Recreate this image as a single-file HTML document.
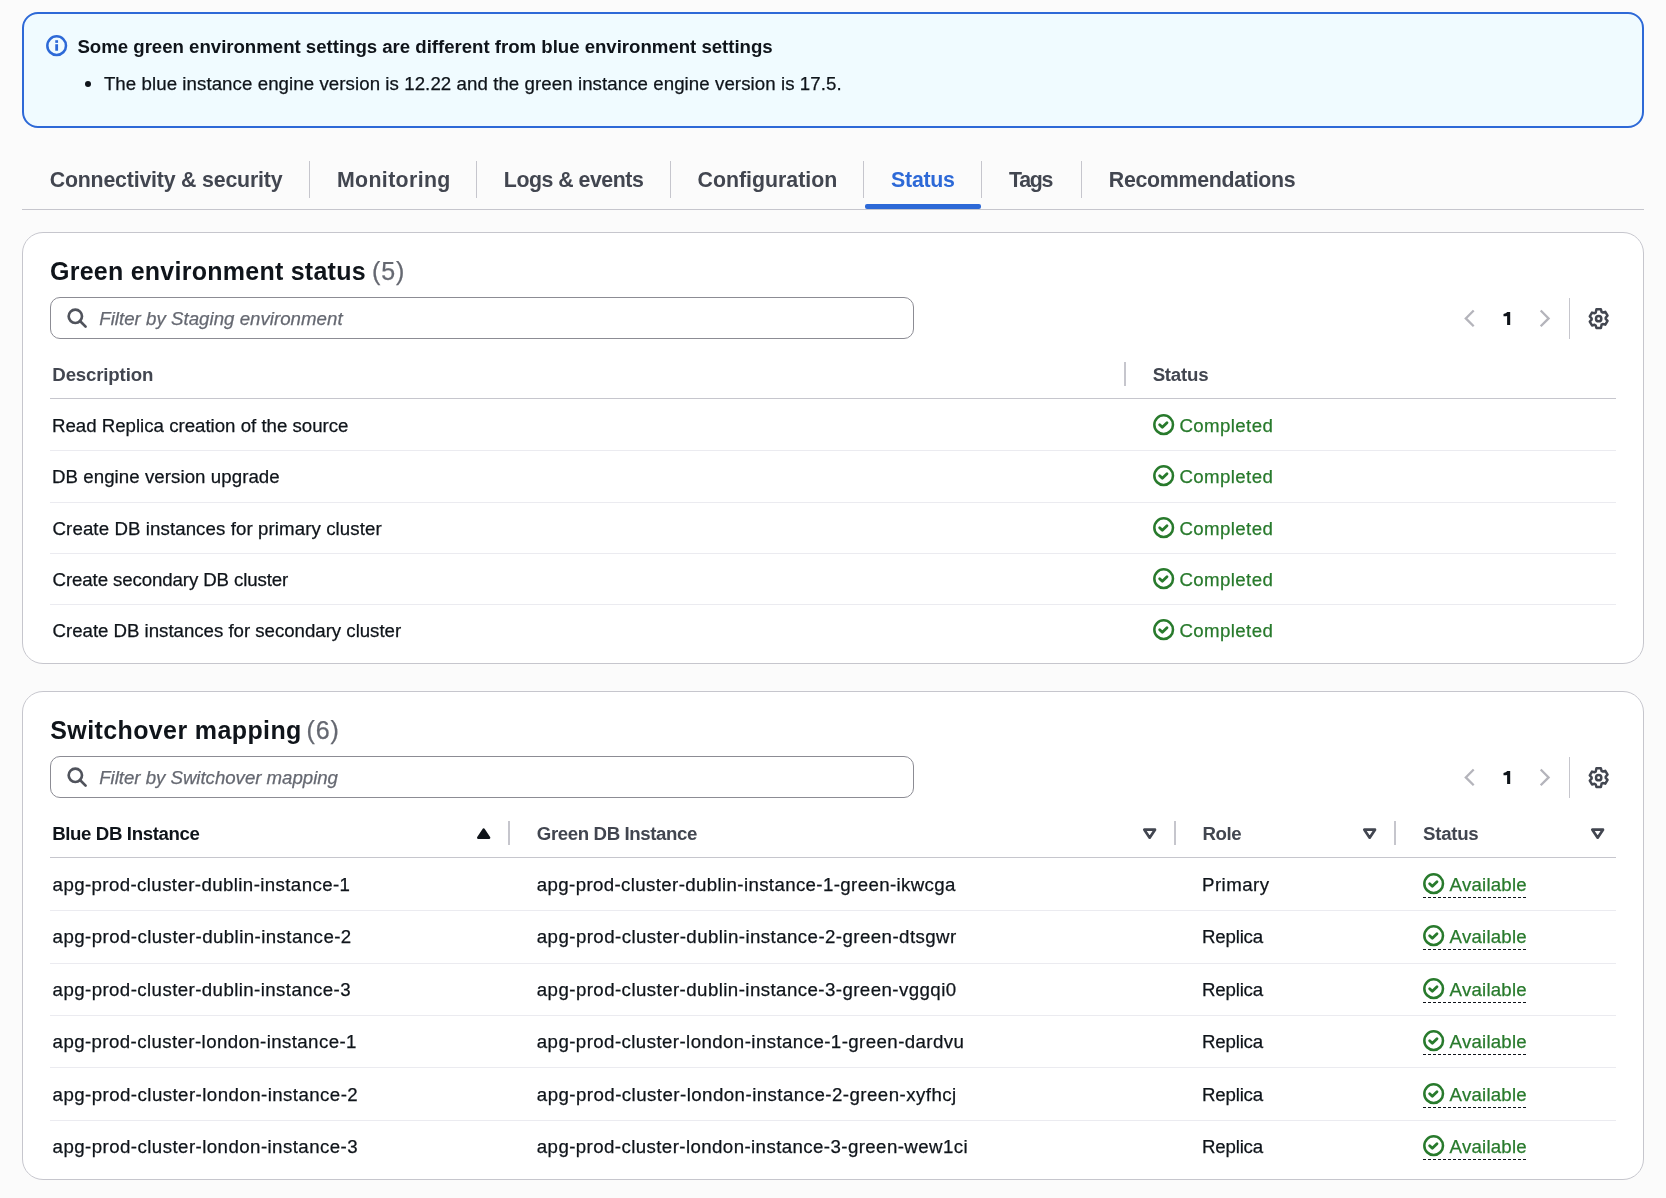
<!DOCTYPE html>
<html><head><meta charset="utf-8"><title>Status</title>
<style>
html,body{margin:0;padding:0;}
body{width:1666px;height:1198px;position:relative;overflow:hidden;background:#fbfbfb;font-family:"Liberation Sans",sans-serif;}
.t{position:absolute;white-space:nowrap;}
.b{position:absolute;}
.i{position:absolute;overflow:visible;}
.root{position:absolute;left:0;top:0;width:1666px;height:1198px;will-change:transform;}
</style></head><body><div class="root">
<div class="b" style="left:22px;top:12px;width:1622px;height:116px;box-sizing:border-box;border:2px solid #2d69d7;border-radius:16px;background:#f0fbff;"></div>
<svg class="i" style="left:45.83px;top:34.88px;width:21.333px;height:21.333px;" viewBox="0 0 16 16" fill="none" stroke-linecap="round" stroke-linejoin="round"><circle cx="8" cy="8" r="7" stroke="#2d69d7" stroke-width="1.9"/><rect x="6.95" y="3.9" width="2.1" height="2" fill="#2d69d7"/><rect x="6.95" y="6.9" width="2.1" height="4.9" fill="#2d69d7"/></svg>
<div class="t" style="left:77.46px;top:37.66px;font-size:18.67px;line-height:18.67px;color:#0f141a;font-weight:700;letter-spacing:-0.032px;">Some green environment settings are different from blue environment settings</div>
<div class="b" style="left:85px;top:81px;width:6px;height:6px;border-radius:50%;background:#0f141a;"></div>
<div class="t" style="left:103.88px;top:74.66px;font-size:18.67px;line-height:18.67px;color:#0f141a;-webkit-text-stroke:0.25px currentColor;letter-spacing:0.075px;">The blue instance engine version is 12.22 and the green instance engine version is 17.5.</div>
<div class="t" style="left:49.73px;top:169.84px;font-size:21.33px;line-height:21.33px;color:#424650;font-weight:700;letter-spacing:-0.194px;">Connectivity &amp; security</div>
<div class="t" style="left:336.97px;top:169.84px;font-size:21.33px;line-height:21.33px;color:#424650;font-weight:700;letter-spacing:0.354px;">Monitoring</div>
<div class="t" style="left:503.87px;top:169.84px;font-size:21.33px;line-height:21.33px;color:#424650;font-weight:700;letter-spacing:-0.491px;">Logs &amp; events</div>
<div class="t" style="left:697.53px;top:169.84px;font-size:21.33px;line-height:21.33px;color:#424650;font-weight:700;">Configuration</div>
<div class="t" style="left:891.09px;top:169.84px;font-size:21.33px;line-height:21.33px;color:#2d69d7;font-weight:700;letter-spacing:-0.260px;">Status</div>
<div class="t" style="left:1009.06px;top:169.84px;font-size:21.33px;line-height:21.33px;color:#424650;font-weight:700;letter-spacing:-1.323px;">Tags</div>
<div class="t" style="left:1108.77px;top:169.84px;font-size:21.33px;line-height:21.33px;color:#424650;font-weight:700;letter-spacing:-0.280px;">Recommendations</div>
<div class="b" style="left:309px;top:161px;width:1px;height:37px;background:#c6c6cd;"></div>
<div class="b" style="left:476px;top:161px;width:1px;height:37px;background:#c6c6cd;"></div>
<div class="b" style="left:670px;top:161px;width:1px;height:37px;background:#c6c6cd;"></div>
<div class="b" style="left:863px;top:161px;width:1px;height:37px;background:#c6c6cd;"></div>
<div class="b" style="left:981px;top:161px;width:1px;height:37px;background:#c6c6cd;"></div>
<div class="b" style="left:1081px;top:161px;width:1px;height:37px;background:#c6c6cd;"></div>
<div class="b" style="left:22px;top:209px;width:1622px;height:1px;background:#c6c6cd;"></div>
<div class="b" style="left:865px;top:204px;width:116px;height:5px;background:#2d69d7;border-radius:2px;"></div>
<div class="b" style="left:22px;top:232px;width:1622px;height:432px;box-sizing:border-box;border:1px solid #c6c6cd;border-radius:21px;background:#ffffff;"></div>
<div class="t" style="left:49.97px;top:259.00px;font-size:25px;line-height:25px;color:#0f141a;font-weight:700;letter-spacing:0.254px;">Green environment status</div>
<div class="t" style="left:371.95px;top:259.00px;font-size:25px;line-height:25px;color:#656871;-webkit-text-stroke:0.25px currentColor;letter-spacing:0.873px;">(5)</div>
<div class="b" style="left:50px;top:297px;width:864px;height:42px;box-sizing:border-box;border:1px solid #8c8c94;border-radius:10px;background:#fff;"></div>
<svg class="i" style="left:65.67px;top:306.80px;width:21.333px;height:21.333px;" viewBox="0 0 16 16" fill="none" stroke-linecap="round" stroke-linejoin="round"><circle cx="7" cy="7" r="5" stroke="#50535c" stroke-width="2"/><path d="m14.7 14.7-4.2-4.2" stroke="#50535c" stroke-width="2"/></svg>
<div class="t" style="left:99.23px;top:309.67px;font-size:18.67px;line-height:18.67px;color:#656871;-webkit-text-stroke:0.25px currentColor;font-style:italic;letter-spacing:0.025px;">Filter by Staging environment</div>
<svg class="i" style="left:0;top:0px;width:1666px;height:400px" viewBox="0 0 1666 400" fill="none"><path d="M1473.7 310.5 L1465.8 318.4 L1473.7 326.3" stroke="#b4b4bb" stroke-width="2.3" stroke-linejoin="miter"/><path d="M1540.7 310.5 L1548.6 318.4 L1540.7 326.3" stroke="#b4b4bb" stroke-width="2.3" stroke-linejoin="miter"/><path d="M1510.2 312 V325 H1507.1 V316 Q1505.4 316.4 1503.5 316.2 V313.9 Q1506 313.6 1507.3 312 Z" fill="#0f141a"/></svg>
<div class="b" style="left:1569px;top:298px;width:1px;height:41px;background:#c6c6cd;"></div>
<svg class="i" style="left:1587.80px;top:307.70px;width:21.333px;height:21.333px;" viewBox="0 0 16 16" fill="none" stroke-linecap="round" stroke-linejoin="round"><path d="M6.32 1h3.36l.51 1.9.9.52 1.89-.52 1.69 2.9-1.39 1.39v1.02l1.39 1.39-1.69 2.9-1.89-.52-.9.52L9.68 15H6.32l-.51-1.9-.9-.52-1.89.52-1.69-2.9 1.39-1.39V7.73L1.33 6.34l1.69-2.9 1.89.52.9-.52L6.32 1Z" stroke="#424650" stroke-width="1.85"/><circle cx="8" cy="8" r="2" stroke="#424650" stroke-width="1.85"/></svg>
<div class="t" style="left:52.35px;top:365.67px;font-size:18.67px;line-height:18.67px;color:#424650;font-weight:700;letter-spacing:-0.170px;">Description</div>
<div class="b" style="left:1124px;top:362px;width:2px;height:24px;background:#c6c6cd;"></div>
<div class="t" style="left:1152.66px;top:365.67px;font-size:18.67px;line-height:18.67px;color:#424650;font-weight:700;letter-spacing:-0.231px;">Status</div>
<div class="b" style="left:50px;top:398px;width:1566px;height:1px;background:#c6c6cd;"></div>
<div class="t" style="left:51.97px;top:416.67px;font-size:18.67px;line-height:18.67px;color:#0f141a;-webkit-text-stroke:0.25px currentColor;letter-spacing:-0.002px;">Read Replica creation of the source</div>
<svg class="i" style="left:1152.93px;top:413.73px;width:21.333px;height:21.333px;" viewBox="0 0 16 16" fill="none" stroke-linecap="round" stroke-linejoin="round"><circle cx="8" cy="8" r="7" stroke="#287a2c" stroke-width="1.9"/><path d="m5 8 2 2 3.5-3.5" stroke="#287a2c" stroke-width="2.1"/></svg>
<div class="t" style="left:1179.45px;top:416.67px;font-size:18.67px;line-height:18.67px;color:#287a2c;-webkit-text-stroke:0.25px currentColor;letter-spacing:0.396px;">Completed</div>
<div class="b" style="left:50px;top:450px;width:1566px;height:1px;background:#ebebf0;"></div>
<div class="t" style="left:51.97px;top:467.67px;font-size:18.67px;line-height:18.67px;color:#0f141a;-webkit-text-stroke:0.25px currentColor;letter-spacing:0.067px;">DB engine version upgrade</div>
<svg class="i" style="left:1152.93px;top:464.73px;width:21.333px;height:21.333px;" viewBox="0 0 16 16" fill="none" stroke-linecap="round" stroke-linejoin="round"><circle cx="8" cy="8" r="7" stroke="#287a2c" stroke-width="1.9"/><path d="m5 8 2 2 3.5-3.5" stroke="#287a2c" stroke-width="2.1"/></svg>
<div class="t" style="left:1179.45px;top:467.67px;font-size:18.67px;line-height:18.67px;color:#287a2c;-webkit-text-stroke:0.25px currentColor;letter-spacing:0.396px;">Completed</div>
<div class="b" style="left:50px;top:502px;width:1566px;height:1px;background:#ebebf0;"></div>
<div class="t" style="left:52.55px;top:519.66px;font-size:18.67px;line-height:18.67px;color:#0f141a;-webkit-text-stroke:0.25px currentColor;letter-spacing:0.094px;">Create DB instances for primary cluster</div>
<svg class="i" style="left:1152.93px;top:516.73px;width:21.333px;height:21.333px;" viewBox="0 0 16 16" fill="none" stroke-linecap="round" stroke-linejoin="round"><circle cx="8" cy="8" r="7" stroke="#287a2c" stroke-width="1.9"/><path d="m5 8 2 2 3.5-3.5" stroke="#287a2c" stroke-width="2.1"/></svg>
<div class="t" style="left:1179.45px;top:519.66px;font-size:18.67px;line-height:18.67px;color:#287a2c;-webkit-text-stroke:0.25px currentColor;letter-spacing:0.396px;">Completed</div>
<div class="b" style="left:50px;top:553px;width:1566px;height:1px;background:#ebebf0;"></div>
<div class="t" style="left:52.55px;top:570.66px;font-size:18.67px;line-height:18.67px;color:#0f141a;-webkit-text-stroke:0.25px currentColor;letter-spacing:-0.104px;">Create secondary DB cluster</div>
<svg class="i" style="left:1152.93px;top:567.73px;width:21.333px;height:21.333px;" viewBox="0 0 16 16" fill="none" stroke-linecap="round" stroke-linejoin="round"><circle cx="8" cy="8" r="7" stroke="#287a2c" stroke-width="1.9"/><path d="m5 8 2 2 3.5-3.5" stroke="#287a2c" stroke-width="2.1"/></svg>
<div class="t" style="left:1179.45px;top:570.66px;font-size:18.67px;line-height:18.67px;color:#287a2c;-webkit-text-stroke:0.25px currentColor;letter-spacing:0.396px;">Completed</div>
<div class="b" style="left:50px;top:604px;width:1566px;height:1px;background:#ebebf0;"></div>
<div class="t" style="left:52.55px;top:621.66px;font-size:18.67px;line-height:18.67px;color:#0f141a;-webkit-text-stroke:0.25px currentColor;letter-spacing:-0.021px;">Create DB instances for secondary cluster</div>
<svg class="i" style="left:1152.93px;top:618.73px;width:21.333px;height:21.333px;" viewBox="0 0 16 16" fill="none" stroke-linecap="round" stroke-linejoin="round"><circle cx="8" cy="8" r="7" stroke="#287a2c" stroke-width="1.9"/><path d="m5 8 2 2 3.5-3.5" stroke="#287a2c" stroke-width="2.1"/></svg>
<div class="t" style="left:1179.45px;top:621.66px;font-size:18.67px;line-height:18.67px;color:#287a2c;-webkit-text-stroke:0.25px currentColor;letter-spacing:0.396px;">Completed</div>
<div class="b" style="left:22px;top:691px;width:1622px;height:489px;box-sizing:border-box;border:1px solid #c6c6cd;border-radius:21px;background:#ffffff;"></div>
<div class="t" style="left:50.28px;top:718.00px;font-size:25px;line-height:25px;color:#0f141a;font-weight:700;letter-spacing:0.389px;">Switchover mapping</div>
<div class="t" style="left:306.45px;top:718.00px;font-size:25px;line-height:25px;color:#656871;-webkit-text-stroke:0.25px currentColor;letter-spacing:0.873px;">(6)</div>
<div class="b" style="left:50px;top:756px;width:864px;height:42px;box-sizing:border-box;border:1px solid #8c8c94;border-radius:10px;background:#fff;"></div>
<svg class="i" style="left:65.67px;top:765.80px;width:21.333px;height:21.333px;" viewBox="0 0 16 16" fill="none" stroke-linecap="round" stroke-linejoin="round"><circle cx="7" cy="7" r="5" stroke="#50535c" stroke-width="2"/><path d="m14.7 14.7-4.2-4.2" stroke="#50535c" stroke-width="2"/></svg>
<div class="t" style="left:99.23px;top:768.66px;font-size:18.67px;line-height:18.67px;color:#656871;-webkit-text-stroke:0.25px currentColor;font-style:italic;letter-spacing:-0.028px;">Filter by Switchover mapping</div>
<svg class="i" style="left:0;top:459px;width:1666px;height:400px" viewBox="0 0 1666 400" fill="none"><path d="M1473.7 310.5 L1465.8 318.4 L1473.7 326.3" stroke="#b4b4bb" stroke-width="2.3" stroke-linejoin="miter"/><path d="M1540.7 310.5 L1548.6 318.4 L1540.7 326.3" stroke="#b4b4bb" stroke-width="2.3" stroke-linejoin="miter"/><path d="M1510.2 312 V325 H1507.1 V316 Q1505.4 316.4 1503.5 316.2 V313.9 Q1506 313.6 1507.3 312 Z" fill="#0f141a"/></svg>
<div class="b" style="left:1569px;top:757px;width:1px;height:41px;background:#c6c6cd;"></div>
<svg class="i" style="left:1587.80px;top:766.70px;width:21.333px;height:21.333px;" viewBox="0 0 16 16" fill="none" stroke-linecap="round" stroke-linejoin="round"><path d="M6.32 1h3.36l.51 1.9.9.52 1.89-.52 1.69 2.9-1.39 1.39v1.02l1.39 1.39-1.69 2.9-1.89-.52-.9.52L9.68 15H6.32l-.51-1.9-.9-.52-1.89.52-1.69-2.9 1.39-1.39V7.73L1.33 6.34l1.69-2.9 1.89.52.9-.52L6.32 1Z" stroke="#424650" stroke-width="1.85"/><circle cx="8" cy="8" r="2" stroke="#424650" stroke-width="1.85"/></svg>
<div class="t" style="left:52.15px;top:824.66px;font-size:18.67px;line-height:18.67px;color:#0f141a;font-weight:700;letter-spacing:-0.377px;">Blue DB Instance</div>
<svg class="i" style="left:472.90px;top:822.70px;width:21.333px;height:21.333px;" viewBox="0 0 16 16" fill="none" stroke-linecap="round" stroke-linejoin="round"><path d="M4 11h8L8 5l-4 6Z" stroke="#0f141a" fill="#0f141a" stroke-width="2"/></svg>
<div class="b" style="left:508px;top:821px;width:2px;height:24px;background:#c6c6cd;"></div>
<div class="t" style="left:536.83px;top:824.66px;font-size:18.67px;line-height:18.67px;color:#424650;font-weight:700;letter-spacing:-0.396px;">Green DB Instance</div>
<svg class="i" style="left:1139.10px;top:822.70px;width:21.333px;height:21.333px;" viewBox="0 0 16 16" fill="none" stroke-linecap="round" stroke-linejoin="round"><path d="M4 5h8l-4 6-4-6Z" stroke="#424650" stroke-width="2"/></svg>
<div class="b" style="left:1174px;top:821px;width:2px;height:24px;background:#c6c6cd;"></div>
<div class="t" style="left:1202.45px;top:824.66px;font-size:18.67px;line-height:18.67px;color:#424650;font-weight:700;letter-spacing:-0.424px;">Role</div>
<svg class="i" style="left:1359.10px;top:822.70px;width:21.333px;height:21.333px;" viewBox="0 0 16 16" fill="none" stroke-linecap="round" stroke-linejoin="round"><path d="M4 5h8l-4 6-4-6Z" stroke="#424650" stroke-width="2"/></svg>
<div class="b" style="left:1394px;top:821px;width:2px;height:24px;background:#c6c6cd;"></div>
<div class="t" style="left:1423.06px;top:824.66px;font-size:18.67px;line-height:18.67px;color:#424650;font-weight:700;letter-spacing:-0.271px;">Status</div>
<svg class="i" style="left:1587.20px;top:822.70px;width:21.333px;height:21.333px;" viewBox="0 0 16 16" fill="none" stroke-linecap="round" stroke-linejoin="round"><path d="M4 5h8l-4 6-4-6Z" stroke="#424650" stroke-width="2"/></svg>
<div class="b" style="left:50px;top:857px;width:1566px;height:1px;background:#c6c6cd;"></div>
<div class="t" style="left:52.61px;top:875.66px;font-size:18.67px;line-height:18.67px;color:#0f141a;-webkit-text-stroke:0.25px currentColor;letter-spacing:0.399px;">apg-prod-cluster-dublin-instance-1</div>
<div class="t" style="left:536.81px;top:875.66px;font-size:18.67px;line-height:18.67px;color:#0f141a;-webkit-text-stroke:0.25px currentColor;letter-spacing:0.376px;">apg-prod-cluster-dublin-instance-1-green-ikwcga</div>
<div class="t" style="left:1201.97px;top:875.66px;font-size:18.67px;line-height:18.67px;color:#0f141a;-webkit-text-stroke:0.25px currentColor;letter-spacing:0.477px;">Primary</div>
<svg class="i" style="left:1422.63px;top:873.13px;width:21.333px;height:21.333px;" viewBox="0 0 16 16" fill="none" stroke-linecap="round" stroke-linejoin="round"><circle cx="8" cy="8" r="7" stroke="#287a2c" stroke-width="1.9"/><path d="m5 8 2 2 3.5-3.5" stroke="#287a2c" stroke-width="2.1"/></svg>
<div class="t" style="left:1449.56px;top:875.66px;font-size:18.67px;line-height:18.67px;color:#287a2c;-webkit-text-stroke:0.25px currentColor;letter-spacing:0.225px;">Available</div>
<div class="b" style="left:1423px;top:896.80px;width:104px;height:1.4px;background:repeating-linear-gradient(to right,#0f141a 0 3px,transparent 3px 5px);"></div>
<div class="b" style="left:50px;top:910px;width:1566px;height:1px;background:#ebebf0;"></div>
<div class="t" style="left:52.61px;top:927.66px;font-size:18.67px;line-height:18.67px;color:#0f141a;-webkit-text-stroke:0.25px currentColor;letter-spacing:0.439px;">apg-prod-cluster-dublin-instance-2</div>
<div class="t" style="left:536.81px;top:927.66px;font-size:18.67px;line-height:18.67px;color:#0f141a;-webkit-text-stroke:0.25px currentColor;letter-spacing:0.439px;">apg-prod-cluster-dublin-instance-2-green-dtsgwr</div>
<div class="t" style="left:1201.97px;top:927.66px;font-size:18.67px;line-height:18.67px;color:#0f141a;-webkit-text-stroke:0.25px currentColor;letter-spacing:-0.172px;">Replica</div>
<svg class="i" style="left:1422.63px;top:925.13px;width:21.333px;height:21.333px;" viewBox="0 0 16 16" fill="none" stroke-linecap="round" stroke-linejoin="round"><circle cx="8" cy="8" r="7" stroke="#287a2c" stroke-width="1.9"/><path d="m5 8 2 2 3.5-3.5" stroke="#287a2c" stroke-width="2.1"/></svg>
<div class="t" style="left:1449.56px;top:927.66px;font-size:18.67px;line-height:18.67px;color:#287a2c;-webkit-text-stroke:0.25px currentColor;letter-spacing:0.225px;">Available</div>
<div class="b" style="left:1423px;top:948.80px;width:104px;height:1.4px;background:repeating-linear-gradient(to right,#0f141a 0 3px,transparent 3px 5px);"></div>
<div class="b" style="left:50px;top:963px;width:1566px;height:1px;background:#ebebf0;"></div>
<div class="t" style="left:52.61px;top:980.66px;font-size:18.67px;line-height:18.67px;color:#0f141a;-webkit-text-stroke:0.25px currentColor;letter-spacing:0.420px;">apg-prod-cluster-dublin-instance-3</div>
<div class="t" style="left:536.81px;top:980.66px;font-size:18.67px;line-height:18.67px;color:#0f141a;-webkit-text-stroke:0.25px currentColor;letter-spacing:0.436px;">apg-prod-cluster-dublin-instance-3-green-vggqi0</div>
<div class="t" style="left:1201.97px;top:980.66px;font-size:18.67px;line-height:18.67px;color:#0f141a;-webkit-text-stroke:0.25px currentColor;letter-spacing:-0.172px;">Replica</div>
<svg class="i" style="left:1422.63px;top:978.13px;width:21.333px;height:21.333px;" viewBox="0 0 16 16" fill="none" stroke-linecap="round" stroke-linejoin="round"><circle cx="8" cy="8" r="7" stroke="#287a2c" stroke-width="1.9"/><path d="m5 8 2 2 3.5-3.5" stroke="#287a2c" stroke-width="2.1"/></svg>
<div class="t" style="left:1449.56px;top:980.66px;font-size:18.67px;line-height:18.67px;color:#287a2c;-webkit-text-stroke:0.25px currentColor;letter-spacing:0.225px;">Available</div>
<div class="b" style="left:1423px;top:1001.80px;width:104px;height:1.4px;background:repeating-linear-gradient(to right,#0f141a 0 3px,transparent 3px 5px);"></div>
<div class="b" style="left:50px;top:1015px;width:1566px;height:1px;background:#ebebf0;"></div>
<div class="t" style="left:52.61px;top:1032.66px;font-size:18.67px;line-height:18.67px;color:#0f141a;-webkit-text-stroke:0.25px currentColor;letter-spacing:0.407px;">apg-prod-cluster-london-instance-1</div>
<div class="t" style="left:536.81px;top:1032.66px;font-size:18.67px;line-height:18.67px;color:#0f141a;-webkit-text-stroke:0.25px currentColor;letter-spacing:0.426px;">apg-prod-cluster-london-instance-1-green-dardvu</div>
<div class="t" style="left:1201.97px;top:1032.66px;font-size:18.67px;line-height:18.67px;color:#0f141a;-webkit-text-stroke:0.25px currentColor;letter-spacing:-0.172px;">Replica</div>
<svg class="i" style="left:1422.63px;top:1030.13px;width:21.333px;height:21.333px;" viewBox="0 0 16 16" fill="none" stroke-linecap="round" stroke-linejoin="round"><circle cx="8" cy="8" r="7" stroke="#287a2c" stroke-width="1.9"/><path d="m5 8 2 2 3.5-3.5" stroke="#287a2c" stroke-width="2.1"/></svg>
<div class="t" style="left:1449.56px;top:1032.66px;font-size:18.67px;line-height:18.67px;color:#287a2c;-webkit-text-stroke:0.25px currentColor;letter-spacing:0.225px;">Available</div>
<div class="b" style="left:1423px;top:1053.80px;width:104px;height:1.4px;background:repeating-linear-gradient(to right,#0f141a 0 3px,transparent 3px 5px);"></div>
<div class="b" style="left:50px;top:1067px;width:1566px;height:1px;background:#ebebf0;"></div>
<div class="t" style="left:52.61px;top:1085.66px;font-size:18.67px;line-height:18.67px;color:#0f141a;-webkit-text-stroke:0.25px currentColor;letter-spacing:0.447px;">apg-prod-cluster-london-instance-2</div>
<div class="t" style="left:536.81px;top:1085.66px;font-size:18.67px;line-height:18.67px;color:#0f141a;-webkit-text-stroke:0.25px currentColor;letter-spacing:0.460px;">apg-prod-cluster-london-instance-2-green-xyfhcj</div>
<div class="t" style="left:1201.97px;top:1085.66px;font-size:18.67px;line-height:18.67px;color:#0f141a;-webkit-text-stroke:0.25px currentColor;letter-spacing:-0.172px;">Replica</div>
<svg class="i" style="left:1422.63px;top:1083.13px;width:21.333px;height:21.333px;" viewBox="0 0 16 16" fill="none" stroke-linecap="round" stroke-linejoin="round"><circle cx="8" cy="8" r="7" stroke="#287a2c" stroke-width="1.9"/><path d="m5 8 2 2 3.5-3.5" stroke="#287a2c" stroke-width="2.1"/></svg>
<div class="t" style="left:1449.56px;top:1085.66px;font-size:18.67px;line-height:18.67px;color:#287a2c;-webkit-text-stroke:0.25px currentColor;letter-spacing:0.225px;">Available</div>
<div class="b" style="left:1423px;top:1106.80px;width:104px;height:1.4px;background:repeating-linear-gradient(to right,#0f141a 0 3px,transparent 3px 5px);"></div>
<div class="b" style="left:50px;top:1120px;width:1566px;height:1px;background:#ebebf0;"></div>
<div class="t" style="left:52.61px;top:1137.66px;font-size:18.67px;line-height:18.67px;color:#0f141a;-webkit-text-stroke:0.25px currentColor;letter-spacing:0.443px;">apg-prod-cluster-london-instance-3</div>
<div class="t" style="left:536.81px;top:1137.66px;font-size:18.67px;line-height:18.67px;color:#0f141a;-webkit-text-stroke:0.25px currentColor;letter-spacing:0.415px;">apg-prod-cluster-london-instance-3-green-wew1ci</div>
<div class="t" style="left:1201.97px;top:1137.66px;font-size:18.67px;line-height:18.67px;color:#0f141a;-webkit-text-stroke:0.25px currentColor;letter-spacing:-0.172px;">Replica</div>
<svg class="i" style="left:1422.63px;top:1135.13px;width:21.333px;height:21.333px;" viewBox="0 0 16 16" fill="none" stroke-linecap="round" stroke-linejoin="round"><circle cx="8" cy="8" r="7" stroke="#287a2c" stroke-width="1.9"/><path d="m5 8 2 2 3.5-3.5" stroke="#287a2c" stroke-width="2.1"/></svg>
<div class="t" style="left:1449.56px;top:1137.66px;font-size:18.67px;line-height:18.67px;color:#287a2c;-webkit-text-stroke:0.25px currentColor;letter-spacing:0.225px;">Available</div>
<div class="b" style="left:1423px;top:1158.80px;width:104px;height:1.4px;background:repeating-linear-gradient(to right,#0f141a 0 3px,transparent 3px 5px);"></div>
</div></body></html>
